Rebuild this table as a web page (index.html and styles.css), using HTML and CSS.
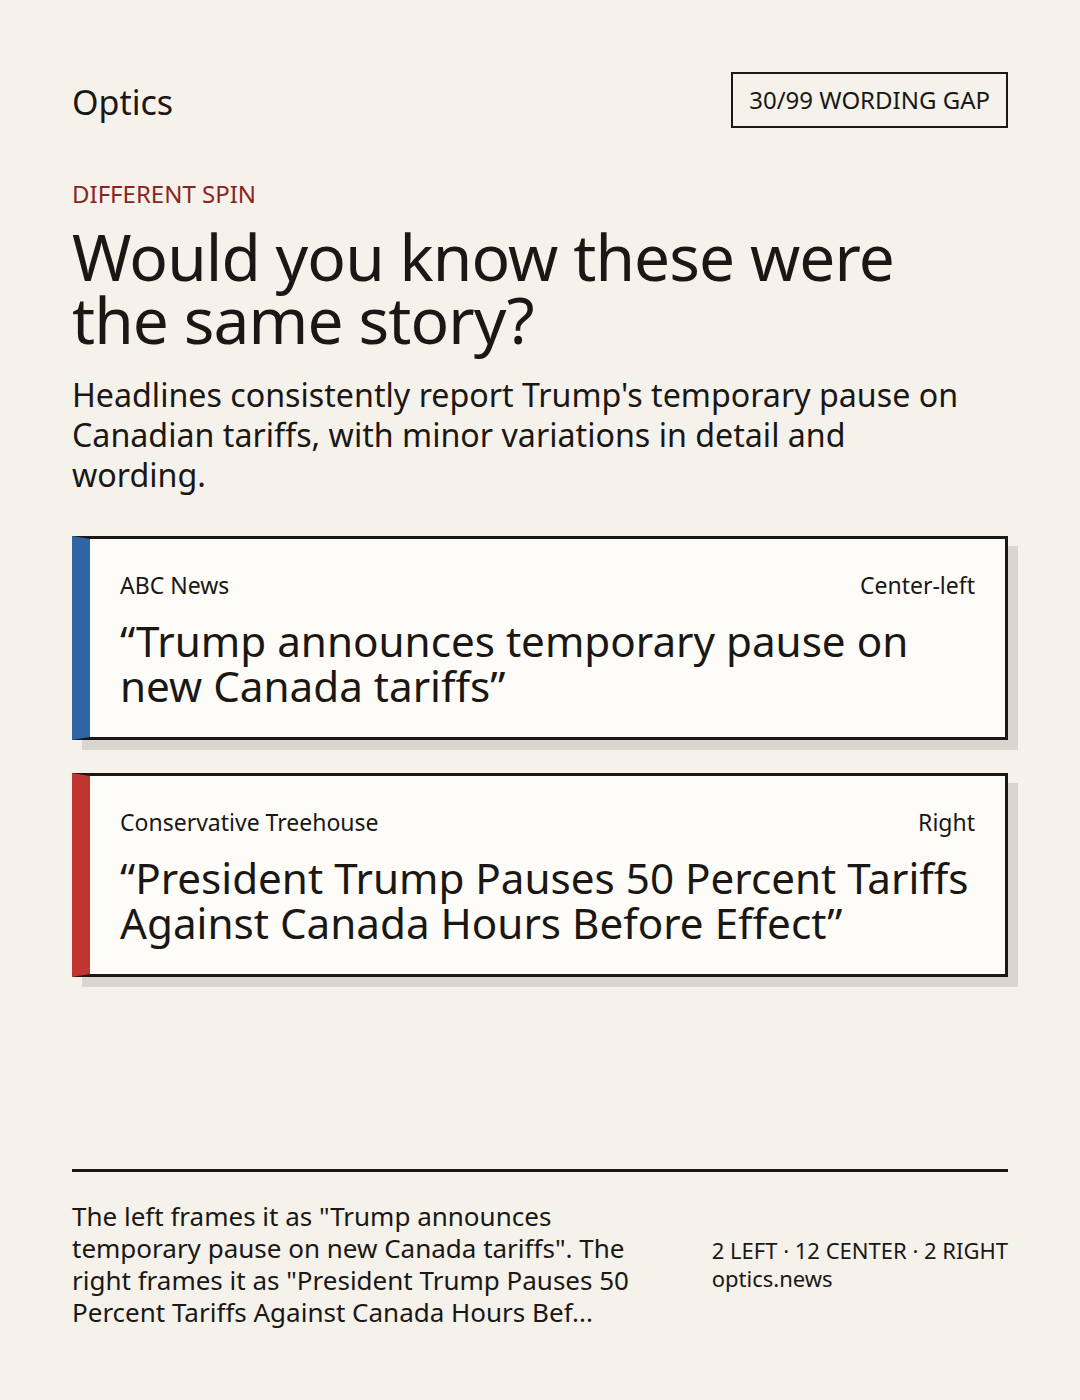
FILE: index.html
```html
<!DOCTYPE html>
<html lang="en">
<head>
<meta charset="utf-8">
<title>Optics</title>
<link rel="stylesheet" href="styles.css">
</head>
<body>
<div class="page">
  <header class="header">
    <div class="brand">Optics</div>
    <div class="badge">30/99 WORDING GAP</div>
  </header>
  <div class="kicker">DIFFERENT SPIN</div>
  <h1 class="title">Would you know these were the same story?</h1>
  <p class="summary">Headlines consistently report Trump's temporary pause on Canadian tariffs, with minor variations in detail and wording.</p>
  <div class="cards">
    <article class="card card-left">
      <div class="card-meta">
        <span class="source">ABC News</span>
        <span class="lean">Center-left</span>
      </div>
      <div class="headline">“Trump announces temporary pause on new Canada tariffs”</div>
    </article>
    <article class="card card-right">
      <div class="card-meta">
        <span class="source">Conservative Treehouse</span>
        <span class="lean">Right</span>
      </div>
      <div class="headline">“President Trump Pauses 50 Percent Tariffs Against Canada Hours Before Effect”</div>
    </article>
  </div>
  <footer class="footer">
    <p class="footer-text">The left frames it as "Trump announces temporary pause on new Canada tariffs". The right frames it as "President Trump Pauses 50 Percent Tariffs Against Canada Hours Bef...</p>
    <div class="footer-meta">
      <div>2 LEFT · 12 CENTER · 2 RIGHT</div>
      <div>optics.news</div>
    </div>
  </footer>
</div>
</body>
</html>
```
FILE: styles.css
```css
html, body {
  margin: 0;
  padding: 0;
}
body {
  background: #f5f1eb;
  color: #1a1714;
  font-family: "Noto Sans", "Open Sans", sans-serif;
}
.page {
  box-sizing: border-box;
  width: 1080px;
  height: 1400px;
  padding: 72px 72px 72px;
  display: flex;
  flex-direction: column;
}
.header {
  display: flex;
  justify-content: space-between;
  align-items: center;
}
.brand {
  font-size: 34px;
  line-height: 40px;
  padding-top: 4px;
}
.badge {
  border: 2px solid #1a1714;
  padding: 0 16px;
  height: 52px;
  line-height: 52px;
  font-size: 24px;
}
.kicker {
  margin-top: 51px;
  font-size: 24px;
  line-height: 30px;
  color: #8a2420;
}
.title {
  margin: 16px 0 0;
  font-size: 64px;
  line-height: 63px;
  font-weight: 400;
  letter-spacing: -0.9px;
  width: 880px;
}
.summary {
  margin: 24px 0 0;
  font-size: 32.2px;
  line-height: 40px;
  width: 892px;
}
.cards {
  margin-top: 41px;
  display: flex;
  flex-direction: column;
  gap: 33px;
}
.card {
  background: #fdfcf8;
  border: 3px solid #1a1714;
  border-left: 18px solid #2f64a6;
  padding: 31px 30px 29px 30px;
  box-shadow: 10px 10px 0 #dad6cf;
}
.card-right {
  border-left-color: #c0352f;
}
.card-meta {
  display: flex;
  justify-content: space-between;
  font-size: 23px;
  line-height: 30px;
}
.headline {
  margin-top: 18px;
  font-size: 42.2px;
  line-height: 45px;
}
.footer {
  margin-top: auto;
  border-top: 3px solid #1a1714;
  padding-top: 28px;
  display: flex;
  justify-content: space-between;
  align-items: center;
}
.footer-text {
  margin: 0;
  width: 590px;
  font-size: 26px;
  line-height: 32px;
}
.footer-meta {
  font-size: 22px;
  line-height: 28px;
}
```
